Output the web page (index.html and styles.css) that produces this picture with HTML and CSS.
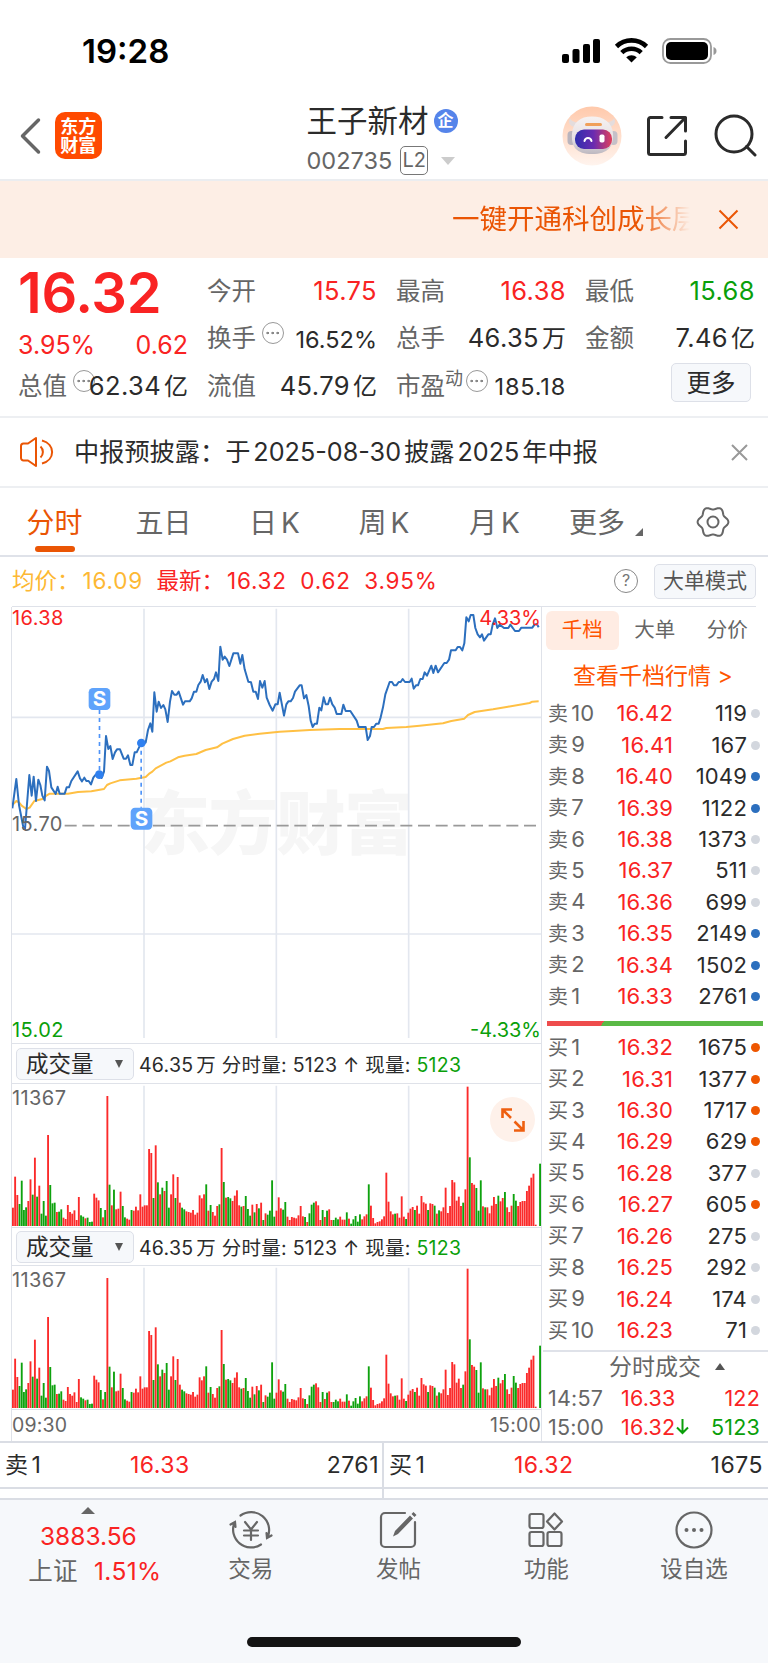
FILE: index.html
```html
<!DOCTYPE html>
<html lang="zh-CN">
<head>
    <meta charset="UTF-8">
    <meta name="viewport" content="width=device-width, initial-scale=1.0">
    <title>王子新材 002735</title>
    <link rel="stylesheet" href="styles.css">
</head>
<body>
    <div class="status-bar">
        <span class="clock">19:28</span>
        <svg class="status-icons" width="156" height="28" viewBox="0 0 156 28">
            <rect x="1" y="17" width="7" height="9" rx="2"/>
            <rect x="11.5" y="12" width="7" height="14" rx="2"/>
            <rect x="22" y="7" width="7" height="19" rx="2"/>
            <rect x="32" y="2" width="7" height="24" rx="2"/>
            <g fill="none" stroke="#000" stroke-width="4.6">
                <path d="M55.5 9.5a21.5 21.5 0 0 1 30 0"/>
                <path d="M60.8 15.6a14 14 0 0 1 19.4 0"/>
            </g>
            <path d="M65.2 20.2a8 8 0 0 1 10.6 0L70.5 25.6z"/>
            <rect x="102" y="2" width="48" height="24" rx="7.5" fill="none" stroke="#999" stroke-width="1.8"/>
            <rect x="105" y="5" width="42" height="18" rx="5"/>
            <path d="M152.5 10v8c2.400-.8 3-2.400 3-4s-.6-3.200-3-4z" fill="#999"/>
        </svg>
    </div>

    <header class="header">
        <svg class="back" width="22" height="38" viewBox="0 0 22 38"><path d="M19.500 3L3.500 19l16 16"/></svg>
        <div class="logo"><span>东方</span><span>财富</span></div>
        <div class="stock">
            <div class="stock-name">王子新材<span class="badge">企</span></div>
            <div class="stock-code">002735<span class="level">L2</span><i class="caret"></i></div>
        </div>
        <svg class="robot" width="60" height="60" viewBox="0 0 60 60">
            <defs>
                <linearGradient id="halo" x1="0" y1="0" x2="0" y2="1">
                    <stop offset="0" stop-color="#ffc9ab"/><stop offset="1" stop-color="#fff4ee"/>
                </linearGradient>
                <linearGradient id="visor" x1="0" y1="0" x2="1" y2="0">
                    <stop offset="0" stop-color="#2f2fae"/><stop offset=".5" stop-color="#6a2bb0"/><stop offset="1" stop-color="#e0405c"/>
                </linearGradient>
                <linearGradient id="head" x1="0" y1="0" x2="0" y2="1">
                    <stop offset="0" stop-color="#f6f2f2"/><stop offset=".6" stop-color="#e6e0e3"/><stop offset="1" stop-color="#bdb8c0"/>
                </linearGradient>
            </defs>
            <circle cx="30" cy="30" r="29.500" fill="url(#halo)"/>
            <path d="M13 21c-6-1-7-5-5-9 1 3 4 4 9 5zM47 21c6-1 7-5 5-9-1 3-4 4-9 5z" fill="#e4dcdc"/>
            <rect x="5.500" y="25" width="8" height="14" rx="4" fill="#b9b4bd"/>
            <rect x="47.500" y="25" width="8" height="14" rx="4" fill="#c5c0c8"/>
            <path d="M30 10.500c12 0 20 6 21 17 1 13-5 20.500-21 20.500S9 40.500 10 27.500c1-11 8-17 20-17z" fill="url(#head)"/>
            <rect x="23" y="17" width="17" height="3" rx="1.500" fill="#f0a05a"/>
            <rect x="13" y="23.500" width="37" height="19.500" rx="9" fill="url(#visor)"/>
            <path d="M22.500 35c1-4 6-4 7 0" fill="none" stroke="#fff" stroke-width="2"/>
            <rect x="37.500" y="28.500" width="5" height="8" rx="1.800" fill="#fff"/>
        </svg>
        <svg class="share" width="42" height="42" viewBox="0 0 42 42">
            <path d="M16 2.500H4.500a2 2 0 0 0-2 2v33a2 2 0 0 0 2 2h33a2 2 0 0 0 2-2V26M25 2.500h14.500V16M39.500 2.500L20 22.500"/>
        </svg>
        <svg class="search" width="43" height="43" viewBox="0 0 43 43">
            <circle cx="20" cy="20" r="18"/><path d="M32.500 32.500l8.500 8.500"/>
        </svg>
    </header>

    <div class="banner">
        <div class="banner-text">一键开通科创成长层</div>
        <svg width="21" height="21" viewBox="0 0 21 21"><path d="M1.500 1.500l18 18M19.500 1.500l-18 18"/></svg>
    </div>

    <section class="quote">
        <div class="last">
            <div class="price">16.32</div>
            <div class="change"><span>3.95%</span><span>0.62</span></div>
        </div>
        <div class="cell"><label>今开</label><span class="up">15.75</span></div>
        <div class="cell"><label>最高</label><span class="up">16.38</span></div>
        <div class="cell"><label>最低</label><span class="down">15.68</span></div>
        <div class="cell"><label>换手<i class="tip"></i></label><span class="small">16.52%</span></div>
        <div class="cell"><label>总手</label><span>46.35<em>万</em></span></div>
        <div class="cell"><label>金额</label><span>7.46<em>亿</em></span></div>
        <div class="cell"><label>总值<i class="tip"></i></label><span>62.34<em>亿</em></span></div>
        <div class="cell"><label>流值</label><span>45.79<em>亿</em></span></div>
        <div class="cell"><label>市盈<sup>动</sup><i class="tip"></i></label><span class="small wide">185.18</span></div>
        <button class="more">更多</button>
    </section>

    <div class="notice">
        <svg class="horn" width="36" height="30" viewBox="0 0 36 30">
            <path d="M9 6.500H4.500a2.500 2.500 0 0 0-2.500 2.500v12a2.500 2.500 0 0 0 2.500 2.500H9l8 5.500V1z"/>
            <path d="M21.500 9.500a7.500 7.500 0 0 1 0 11M23 3.500c13.500 3.500 13.500 19.500 0 23"/>
        </svg>
        <span>中报预披露：于<b>2025-08-30</b>披露<b>2025</b>年中报</span>
        <svg class="close" width="17" height="17" viewBox="0 0 17 17"><path d="M1 1l15 15M16 1L1 16"/></svg>
    </div>

    <nav class="tabs">
        <a class="active">分时</a>
        <a>五日</a>
        <a>日<b>K</b></a>
        <a>周<b>K</b></a>
        <a>月<b>K</b></a>
        <a class="tab-more">更多<i class="corner"></i></a>
        <svg width="34" height="34" viewBox="0 0 34 34">
            <path id="gear" d=""/>
            <circle cx="17" cy="17" r="5.500"/>
        </svg>
    </nav>

    <div class="summary">
        <span class="avg">均价：<b>16.09</b></span>
        <span class="up newest">最新：<b>16.32</b></span>
        <b class="up">0.62</b>
        <b class="up">3.95%</b>
        <span class="help">?</span>
        <button>大单模式</button>
    </div>

    <main class="main">
        <div class="charts">
            <div class="price-chart">
                <svg width="530" height="438" viewBox="0 0 1590 1314">
                    <text class="watermark" x="386" y="730" textLength="818">东方财富</text>
                    <g class="grid">
                        <path d="M396 8V1296M793 8V1296M1190 8V1296M0 334H1588M0 984H1588"/>
                    </g>
                    <path class="base" d="M158 659H1580"/>
                    <polyline class="avg-line" id="avgLine"/>
                    <polyline class="price-line" id="priceLine"/>
                    <g class="mark">
                        <path d="M262.500 312V505M387.500 410V605"/>
                        <circle cx="262" cy="506" r="13"/><circle cx="388" cy="411" r="13"/>
                        <rect x="230" y="246" width="65" height="66" rx="13"/>
                        <rect x="356" y="605" width="65" height="66" rx="13"/>
                        <text x="262.500" y="300">S</text><text x="388.500" y="659">S</text>
                    </g>
                </svg>
                <span class="label top-left up">16.38</span>
                <span class="label top-right up">4.33%</span>
                <span class="label middle">15.70</span>
                <span class="label bottom-left down">15.02</span>
                <span class="label bottom-right down">-4.33%</span>
            </div>

            <div class="vol-head">
                <div class="select">成交量<i></i></div>
                <span>46.35<em>万</em> 分时量: 5123 ↑ 现量: <b class="down">5123</b></span>
            </div>
            <div class="vol-chart">
                <svg width="530" height="145" viewBox="0 0 1590 435"></svg>
                <span class="label vol-max">11367</span>
                <div class="expand">
                    <svg width="24" height="24" viewBox="0 0 24 24"><path d="M10 10L2 2M1.500 10V1.500H11M13.500 13.500L22 22M22.500 13V22.500H13"/></svg>
                </div>
            </div>

            <div class="vol-head second">
                <div class="select">成交量<i></i></div>
                <span>46.35<em>万</em> 分时量: 5123 ↑ 现量: <b class="down">5123</b></span>
            </div>
            <div class="vol-chart">
                <svg width="530" height="145" viewBox="0 0 1590 435"></svg>
                <span class="label vol-max">11367</span>
            </div>
            <div class="times"><span>09:30</span><span>15:00</span></div>
        </div>

        <aside class="depth">
            <div class="depth-tabs"><span class="active">千档</span><span>大单</span><span>分价</span></div>
            <div class="depth-link">查看千档行情 <b>&gt;</b></div>
            <div class="levels" id="sells"></div>
            <div class="ratio"></div>
            <div class="levels" id="buys"></div>
            <div class="deals">
                <div class="deals-title">分时成交<i></i></div>
                <div class="deal"><span>14:57</span><span class="up">16.33</span><span class="up">122</span></div>
                <div class="deal"><span>15:00</span><span class="up">16.32<svg width="13" height="17" viewBox="0 0 13 17"><path d="M6.500 1v14M1 9.500L6.500 15 12 9.500"/></svg></span><span class="down">5123</span></div>
            </div>
        </aside>
    </main>

    <div class="best">
        <div><span>卖<b>1</b></span><span class="up">16.33</span><span>2761</span></div>
        <div><span>买<b>1</b></span><span class="up">16.32</span><span>1675</span></div>
    </div>

    <footer class="toolbar">
        <div class="index">
            <i></i>
            <span class="up">3883.56</span>
            <span>上证<b class="up">1.51%</b></span>
        </div>
        <div class="tool">
            <svg width="44" height="40" viewBox="0 0 44 40">
                <path d="M11.500 5.500A18 18 0 0 1 38.500 27.500M32 34.500A18 18 0 0 1 5.500 12.500M1.500 14.500l4.500-2.500.500 5M42.500 25.500l-4.500 2.500-.5-5"/>
                <path d="M16 12l6 7.500 6-7.500M22 19.500V30M15 20.500h14M15 25.500h14"/>
            </svg>
            <span>交易</span>
        </div>
        <div class="tool">
            <svg width="44" height="40" viewBox="0 0 44 40">
                <path d="M29 3H9a4 4 0 0 0-4 4v26a4 4 0 0 0 4 4h26a4 4 0 0 0 4-4V12"/>
                <path class="solid" d="M34 5.500l3 3L22 24l-5 2.500L19 21zM35.500 4l2-2 3 3-2 2z"/>
            </svg>
            <span>发帖</span>
        </div>
        <div class="tool">
            <svg width="44" height="40" viewBox="0 0 44 40">
                <rect x="5.500" y="4" width="14" height="14" rx="2"/>
                <rect x="5.500" y="22" width="14" height="14" rx="2"/>
                <rect x="23.500" y="22" width="14" height="14" rx="2"/>
                <path d="M30.500 3.500l7.500 8-7.500 8-7.500-8z" stroke-linejoin="round"/>
            </svg>
            <span>功能</span>
        </div>
        <div class="tool">
            <svg width="44" height="40" viewBox="0 0 44 40">
                <circle cx="22" cy="20" r="17.500"/>
                <circle class="solid" cx="14.500" cy="20" r="2"/><circle class="solid" cx="22" cy="20" r="2"/><circle class="solid" cx="29.500" cy="20" r="2"/>
            </svg>
            <span>设自选</span>
        </div>
        <div class="home"></div>
    </footer>

    <script src="chart.js"></script>
</body>
</html>
```
FILE: styles.css
```css
* {
    box-sizing: border-box;
}
body {
    margin: 0;
    width: 768px;
    height: 1663px;
    overflow: hidden;
    background: #fff;
    color: #2b2b2b;
    font-family: Inter, "Noto Sans CJK SC", sans-serif;
    font-size: 24px;
}
b, em, i {
    font-weight: 400;
    font-style: normal;
}
svg {
    display: block;
    flex: none;
}
span, label, a {
    white-space: nowrap;
}
.up {
    color: #f92323;
}
.down {
    color: #0a9f0a;
}
button {
    font: inherit;
    color: inherit;
    padding: 0;
    background: #f6f8fb;
    border: 1.5px solid #dde0e8;
    border-radius: 5px;
}

/* status bar */
.status-bar {
    height: 98px;
    padding: 4px 51px 0 82px;
    display: flex;
    justify-content: space-between;
    align-items: center;
}
.clock {
    font-size: 33px;
    font-weight: 600;
    color: #000;
    line-height: 40px;
}

/* header */
.header {
    height: 83px;
    border-bottom: 2px solid #ebedf0;
    display: flex;
    align-items: center;
    padding: 0 11px 6px 19px;
}
.header svg {
    fill: none;
    stroke: #2b2b2b;
    stroke-width: 3;
    stroke-linecap: round;
    stroke-linejoin: round;
}
.header .back {
    stroke: #666;
    stroke-width: 3.5;
}
.logo {
    width: 47px;
    height: 47px;
    margin-left: 14px;
    border-radius: 10px;
    background: #ff4a00;
    color: #fff;
    font-size: 18px;
    font-weight: 700;
    line-height: 19px;
    display: flex;
    flex-direction: column;
    align-items: center;
    justify-content: center;
}
.stock {
    width: 160px;
    margin-left: 205px;
    padding-top: 8px;
}
.stock-name {
    font-size: 30.5px;
    line-height: 38px;
    display: flex;
    align-items: center;
}
.badge {
    width: 24px;
    height: 24px;
    margin-left: 5px;
    border-radius: 50%;
    background: #5584ea;
    color: #fff;
    font-size: 16px;
    font-weight: 700;
    line-height: 23px;
    text-align: center;
}
.stock-code {
    height: 34px;
    margin-top: 4px;
    font-size: 23.5px;
    color: #666;
    display: flex;
    align-items: center;
}
.level {
    width: 28px;
    height: 29px;
    margin: 0 13px 0 8px;
    border: 1.5px solid #777;
    border-radius: 5px;
    font-size: 20px;
    line-height: 27px;
    text-align: center;
}
.caret {
    border: 7px solid transparent;
    border-top: 8px solid #ccc;
    border-bottom: 0;
}
.header .robot {
    margin-left: 97px;
    stroke: none;
}
.header .robot path[stroke] {
    stroke-width: 2;
}
.share {
    margin-left: 24px;
}
.search {
    margin-left: 26px;
}

/* banner */
.banner {
    height: 77px;
    background: #fdeee5;
    padding: 0 29px 0 452px;
    display: flex;
    align-items: center;
    justify-content: space-between;
}
.banner-text {
    width: 238px;
    margin-top: -5px;
    overflow: hidden;
    white-space: nowrap;
    font-size: 27.5px;
    color: #ea5504;
    -webkit-mask-image: linear-gradient(90deg, #000 78%, transparent 100%);
    mask-image: linear-gradient(90deg, #000 78%, transparent 100%);
}
.banner svg {
    fill: none;
    stroke: #ea5504;
    stroke-width: 2;
}

/* quote */
.quote {
    height: 160px;
    border-bottom: 2px solid #edeff2;
    padding: 9px 12px 0 18px;
    display: grid;
    grid-template-columns: repeat(4, 170px);
    grid-template-rows: repeat(3, 47.5px);
    column-gap: 19px;
}
.last {
    grid-row: span 2;
    color: #f92323;
}
.price {
    margin-top: -2px;
    font-size: 56px;
    font-weight: 600;
    line-height: 56px;
    letter-spacing: -0.3px;
}
.change {
    display: flex;
    justify-content: space-between;
    line-height: 48px;
    font-size: 25px;
}
.cell {
    display: flex;
    justify-content: space-between;
    align-items: center;
    font-size: 25.5px;
    letter-spacing: 0.4px;
    line-height: 40px;
}
.cell label {
    display: flex;
    color: #666;
    font-size: 24.5px;
    letter-spacing: 0;
}
.cell em {
    margin-left: 3px;
    font-size: 24px;
    letter-spacing: 0;
    line-height: 30px;
}
.cell .small {
    font-size: 23.5px;
    padding-top: 3px;
    letter-spacing: 0;
}
.cell .wide {
    letter-spacing: 0.8px;
}
.cell sup {
    font-size: 18px;
    line-height: 26px;
}
.tip {
    width: 22px;
    height: 22px;
    margin: 4px -30px 0 6px;
    border: 1.5px solid #999;
    border-radius: 50%;
    background: radial-gradient(circle, #888 1px, transparent 1.6px) 1.5px center / 5.3px 100% no-repeat,
        radial-gradient(circle, #888 1px, transparent 1.6px) center / 5.3px 100% no-repeat,
        radial-gradient(circle, #888 1px, transparent 1.6px) 12.2px center / 5.3px 100% no-repeat;
}
.cell sup + .tip {
    margin-left: 3px;
}
.more {
    width: 80px;
    height: 39px;
    margin: 1px 0 0 86px;
    line-height: 34px;
    font-size: 24.5px;
}

/* notice */
.notice {
    height: 70px;
    border-bottom: 2px solid #edeff2;
    padding: 0 20px 0 19px;
    display: flex;
    align-items: center;
    font-size: 25.2px;
}
.notice span {
    flex: 1;
    margin: -4px 0 0 19px;
}
.notice b {
    margin: 0 3px;
}
.notice svg {
    fill: none;
    stroke: #ea5504;
    stroke-width: 2;
    stroke-linejoin: round;
}
.notice .close {
    stroke: #999;
}

/* tabs */
.tabs {
    height: 69px;
    border-bottom: 2px solid #dfe2e9;
    display: grid;
    grid-template-columns: 109px 109px 113px 106px 115px 108px 108px;
    font-size: 28px;
    color: #666;
}
.tabs a {
    text-align: center;
    line-height: 70px;
}
.tabs b {
    margin-left: 4px;
}
.tabs .active {
    position: relative;
    color: #ea5504;
}
.tabs .active::after {
    content: "";
    position: absolute;
    left: 35px;
    top: 58px;
    width: 40px;
    height: 6px;
    border-radius: 3px;
    background: #ea5504;
}
.corner {
    display: inline-block;
    margin-left: 10px;
    border: 4px solid #666;
    border-top-color: transparent;
    border-left-color: transparent;
    vertical-align: -3px;
}
.tabs svg {
    margin: 17px 0 0 36px;
    fill: none;
    stroke: #666;
    stroke-width: 2;
}

/* averages line */
.summary {
    height: 50px;
    margin: 0 12px;
    border-bottom: 1px solid #dfe2e9;
    display: flex;
    align-items: center;
    font-size: 22.5px;
    line-height: 30px;
    padding-bottom: 1px;
}
.summary b {
    margin-right: 13.5px;
    letter-spacing: 0.8px;
}
.summary span b {
    margin-left: 3px;
}
.avg {
    color: #fdb833;
}
.help {
    width: 24px;
    height: 24px;
    margin: 0 16px 0 auto;
    border: 1.5px solid #888;
    border-radius: 50%;
    font-size: 16px;
    line-height: 21px;
    text-align: center;
    color: #777;
}
.summary button {
    width: 102px;
    height: 35px;
    font-size: 21px;
    line-height: 30px;
    color: #555;
}

/* charts */
.main {
    height: 834px;
    display: flex;
}
.charts {
    width: 531px;
    margin-left: 11px;
    border-left: 1px solid #dfe2e9;
    border-right: 1px solid #dfe2e9;
}
.price-chart, .vol-chart {
    position: relative;
    border-bottom: 1px solid #dfe2e9;
}
.price-chart {
    height: 438px;
}
.price-chart svg {
    margin-top: -1px;
}
.grid {
    fill: none;
    stroke: #e3e7ef;
    stroke-width: 5;
}
.watermark {
    font-size: 208px;
    font-weight: 900;
    fill: #f6f6f6;
}
.base {
    stroke: #999;
    stroke-width: 5;
    stroke-dasharray: 36 17;
}
.avg-line, .price-line {
    fill: none;
    stroke: #ffc044;
    stroke-width: 6;
    stroke-linejoin: round;
}
.price-line {
    stroke: #2c6fbe;
}
.mark path {
    stroke: #4f94f8;
    stroke-width: 5;
    stroke-dasharray: 12 12;
}
.mark circle {
    fill: #2f80f0;
}
.mark rect {
    fill: #5fa3fb;
}
.mark text {
    fill: #fff;
    font-size: 62px;
    font-weight: 700;
    text-anchor: middle;
}
.label {
    position: absolute;
    font-size: 20px;
    line-height: 24px;
    letter-spacing: 0.4px;
}
.top-left {
    left: 0;
    top: 0;
}
.top-right {
    right: 0;
    top: 0;
    letter-spacing: 0;
}
.middle {
    left: 0;
    top: 206px;
    color: #666;
}
.bottom-left {
    left: 0;
    bottom: 1px;
}
.bottom-right {
    right: 0;
    bottom: 1px;
    letter-spacing: 0;
}
.vol-head {
    height: 40px;
    padding-left: 4px;
    border-bottom: 1px solid #dfe2e9;
    display: flex;
    align-items: center;
    font-size: 19.5px;
    letter-spacing: 0.25px;
}
.vol-head.second {
    height: 38px;
}
.vol-head em {
    margin-left: 3px;
}
.select {
    width: 118px;
    height: 32px;
    margin-right: 5px;
    padding: 0 10px 0 9px;
    border: 1.5px solid #dde0e8;
    border-radius: 5px;
    background: #f6f8fb;
    display: flex;
    align-items: center;
    justify-content: space-between;
    font-size: 22.5px;
    line-height: 28px;
    letter-spacing: 0;
}
.select i {
    border: 4.5px solid transparent;
    border-top: 8px solid #555;
    border-bottom: 0;
}
.vol-chart {
    height: 145px;
}
.vol-chart svg {
    margin-top: -1px;
}
.vol-max {
    left: 0;
    top: 3px;
    color: #666;
}
.expand {
    position: absolute;
    right: 6px;
    top: 14px;
    width: 45px;
    height: 45px;
    border-radius: 50%;
    background: #fef1ea;
    display: grid;
    place-items: center;
}
.expand svg {
    margin: 0;
    fill: none;
    stroke: #ee5f10;
    stroke-width: 2.6;
}
.times {
    display: flex;
    justify-content: space-between;
    font-size: 19.5px;
    line-height: 31px;
    letter-spacing: 0.2px;
    color: #666;
}

/* order book */
.depth {
    width: 226px;
    padding-left: 1px;
    display: flex;
    flex-direction: column;
}
.depth-tabs {
    margin: 4px 0 0 3px;
    height: 39px;
    display: flex;
    color: #666;
    font-size: 20.5px;
    line-height: 38px;
    text-align: center;
}
.depth-tabs span {
    width: 72.5px;
}
.depth-tabs .active {
    color: #ff5400;
    background: #ffece3;
    border-radius: 6px;
}
.depth-link {
    height: 48px;
    padding-left: 30px;
    font-size: 23px;
    line-height: 52px;
    color: #ff5400;
}
.level-row {
    height: 31.45px;
    padding: 0 8px 0 5px;
    display: grid;
    grid-template-columns: 50px 75px 74px 9px;
    align-items: center;
    font-size: 22px;
    line-height: 31px;
    letter-spacing: 0.15px;
    text-align: right;
}
.level-row .name {
    color: #666;
    text-align: left;
    font-size: 20px;
}
.level-row .name b {
    margin-left: 3px;
    font-size: 22px;
}
.dot {
    width: 9px;
    height: 9px;
    margin-left: 4px;
    border-radius: 50%;
    background: #d3d7de;
}
.dot.sell {
    background: #2c6fbe;
}
.dot.buy {
    background: #ee5600;
}
.ratio {
    width: 216px;
    height: 5px;
    margin: 8.5px 0 6px 4px;
    background: linear-gradient(130deg, #ee4c4c 44px, #5ab946 44px);
}
.deals {
    border-top: 2px solid #dfe2e9;
    margin-top: 4px;
}
.deals-title {
    height: 31px;
    padding: 0 43px 2px 66px;
    display: flex;
    align-items: center;
    justify-content: space-between;
    color: #666;
    font-size: 23px;
    line-height: 28px;
}
.deals-title i {
    border: 5px solid transparent;
    border-bottom: 7px solid #555;
    border-top: 0;
}
.deal {
    height: 29px;
    padding: 0 8px 0 5px;
    display: grid;
    grid-template-columns: 73px 80px 1fr;
    align-items: center;
    font-size: 21.5px;
    letter-spacing: 0.2px;
    color: #666;
}
.deal span {
    display: flex;
    align-items: center;
}
.deal span:last-child {
    justify-content: flex-end;
}
.deal svg {
    margin-left: 1px;
    fill: none;
    stroke: #0a9f0a;
    stroke-width: 2;
}

/* best bid / ask */
.best {
    height: 57px;
    border-top: 2px solid #dadde4;
    display: flex;
}
.best div {
    flex: 1;
    height: 46px;
    padding: 0 5px 0 5px;
    border-bottom: 2px solid #dadde4;
    display: grid;
    grid-template-columns: 125px 1fr 1fr;
    align-items: center;
    font-size: 23px;
    line-height: 30px;
    letter-spacing: 0.5px;
    position: relative;
}
.best div + div::before {
    content: "";
    position: absolute;
    left: -2px;
    top: 0;
    width: 2px;
    height: 56px;
    background: #dadde4;
}
.best span:last-child {
    text-align: right;
}
.best b {
    margin-left: 3px;
}

/* toolbar */
.toolbar {
    position: relative;
    height: 166px;
    background: #f6f8fb;
    border-top: 2px solid #dadde4;
    display: flex;
    color: #666;
}
.index {
    width: 177px;
    display: flex;
    flex-direction: column;
    align-items: center;
    padding-top: 7px;
    line-height: 35px;
    font-size: 24.5px;
}
.index i {
    margin-bottom: 5px;
    border: 7px solid transparent;
    border-bottom: 7px solid #666;
    border-top: 0;
}
.index span:last-child {
    margin-left: 13px;
    letter-spacing: 0.4px;
}
.index b {
    margin-left: 16px;
}
.tool {
    width: 148px;
    display: flex;
    flex-direction: column;
    align-items: center;
    padding-top: 10px;
    font-size: 22.5px;
    line-height: 38px;
}
.tool svg {
    fill: none;
    stroke: #666;
    stroke-width: 2.2;
    stroke-linecap: round;
}
.tool .solid {
    fill: #666;
    stroke: none;
}
.home {
    position: absolute;
    left: 247px;
    bottom: 17px;
    width: 274px;
    height: 10px;
    border-radius: 5px;
    background: #141414;
}
```
FILE: chart.js
```js
// minute line, drawn on the 1590 x 1314 chart canvas
const price = `1,607 13,519 21,597 35,669 39,669 52,507 59,569 65,512 72,585 79,521 85,537 91,569 98,583 105,482 111,495 118,544
131,564 137,542 143,563 158,563 164,544 171,544 178,525 197,496 204,517 210,526 217,515 223,525 230,525 237,535 244,515
250,507 262,505 269,516 276,497 282,390 289,429 295,420 302,459 309,439 315,430 324,430 335,458 342,458 348,448 355,477
361,477 368,439 374,439 388,410 401,410 408,372 415,352 421,377 427,259 434,317 440,287 447,306 454,297 460,310 467,348
474,287 480,255 487,266 494,266 500,257 513,296 519,286 533,286 539,277 546,257 553,257 559,237 566,227 572,207 579,229
585,219 592,249 599,227 606,219 612,199 619,225 625,122 632,161 638,152 645,161 652,180 664,142 678,142 685,173 691,147
698,190 709,227 717,229 724,257 731,257 738,279 744,225 751,245 758,225 764,275 773,297 782,314 790,295 797,295 803,260
816,329 823,295 829,286 836,286 843,276 849,257 863,238 869,238 876,277 883,267 890,300 896,344 902,363 908,353 915,353
922,305 928,313 935,274 941,295 948,295 954,275 961,295 968,305 974,324 988,324 994,296 1001,315 1015,315 1034,344
1040,363 1061,363 1067,402 1074,390 1079,363 1086,363 1093,353 1100,353 1106,334 1113,304 1120,265 1133,228 1140,228
1146,238 1153,238 1160,228 1166,228 1172,219 1179,228 1193,228 1199,218 1205,248 1212,238 1218,238 1225,219 1232,219
1238,199 1245,209 1258,179 1264,201 1271,179 1278,199 1297,171 1304,171 1311,161 1317,133 1331,133 1337,123 1344,123
1351,133 1357,112 1363,34 1370,46 1376,27 1384,27 1390,66 1397,85 1404,94 1410,85 1416,104 1429,85 1436,85 1442,56
1449,37 1456,66 1463,56 1476,66 1489,66 1495,56 1509,75 1521,75 1528,65 1561,65 1568,55 1575,55 1580,64`;

const average = `1,597 13,585 21,589 29,599 43,609 53,605 67,585 91,579 103,569 113,563 168,563 198,558 238,556 276,549 285,537
295,532 323,523 373,518 401,513 413,502 421,497 431,487 463,470 475,466 498,454 518,449 553,444 581,432 615,424 631,413
663,399 698,389 743,383 773,380 803,377 843,375 893,372 983,369 1113,369 1123,366 1183,363 1223,359 1293,352 1318,345
1357,338 1368,327 1388,318 1443,310 1488,302 1553,291 1561,287 1580,286`;

// volume per minute: r = up, g = down
const volume = `r55 r148 r93 g66 g136 g48 g56 r75 r140 g94 r205 g88 r121 g37 g75 g31 r273 g123 g68 g70 r42 g43 g50 r25 r21
r63 r42 r37 r47 r18 r87 g32 g28 r23 g25 g12 g13 r97 r85 r77 g54 r26 g48 r390 g124 r62 g109 r50 r52 r103 g60 g26 r22 r19
g48 r46 r58 r47 r95 r58 r62 r62 r231 r219 g84 r242 g131 r95 g115 r105 g135 g55 r95 r155 g84 r147 r70 g55 g50 r44 r42 r40
r48 r34 r40 r92 r83 r95 g125 r46 g63 r42 r31 r60 g65 r234 g132 r85 g87 g83 r75 r91 r107 r62 g58 r60 g90 g51 g31 r64 g41
r66 g53 r70 g18 r38 g34 g46 g137 g28 r46 r86 r53 g49 g72 r28 r18 r27 r25 r23 r32 r60 r29 g27 r12 g38 g64 g70 r74 r62 r18
g48 r27 g46 r50 r18 g18 g25 g20 r28 r19 r19 g41 r22 g7 g20 g30 g13 g35 r20 r29 r35 g125 r61 r24 r8 r12 r14 r20 r29 r160
r73 r44 r35 g37 r38 r25 r89 r28 g21 r40 r52 r57 g48 r61 r37 r90 r71 r67 g48 r68 r66 g61 r37 g47 r44 r56 r115 r39 r60 r138
r131 r76 r88 r60 g70 r110 r418 g206 r129 r124 g114 g46 g137 r59 g56 r56 r38 r61 r87 r66 g91 r74 r84 g102 r56 r42 r61 g96
g76 r60 r72 r75 r75 r105 r121 r145 r157 r4 r0 g187`.split(/\s+/);

document.getElementById('priceLine').setAttribute('points', price);
document.getElementById('avgLine').setAttribute('points', average);

const step = 1588 / volume.length;
let bars = '<path class="grid" d="M396 8V428M793 8V428M1190 8V428"/>';
volume.forEach((v, i) => {
    const h = Number(v.slice(1));
    const fill = v[0] === 'r' ? '#fb2a2a' : '#0ea20e';
    bars += `<rect x="${(i * step).toFixed(1)}" y="${429 - h}" width="5.6" height="${h}" fill="${fill}"/>`;
});
document.querySelectorAll('.vol-chart > svg').forEach(svg => {
    svg.innerHTML = bars;
});

// order book rows, last flag marks a coloured dot
const sells = [['10', 16.42, 119], ['9', 16.41, 167], ['8', 16.40, 1049, 1], ['7', 16.39, 1122, 1], ['6', 16.38, 1373],
    ['5', 16.37, 511], ['4', 16.36, 699], ['3', 16.35, 2149, 1], ['2', 16.34, 1502, 1], ['1', 16.33, 2761, 1]];
const buys = [['1', 16.32, 1675, 1], ['2', 16.31, 1377, 1], ['3', 16.30, 1717, 1], ['4', 16.29, 629, 1], ['5', 16.28, 377],
    ['6', 16.27, 605, 1], ['7', 16.26, 275], ['8', 16.25, 292], ['9', 16.24, 174], ['10', 16.23, 71]];

function fillLevels(id, rows, word, cls) {
    document.getElementById(id).innerHTML = rows.map(([n, p, vol, big]) => `
        <div class="level-row">
            <span class="name">${word}<b>${n}</b></span>
            <span class="up">${p.toFixed(2)}</span>
            <span>${vol}</span>
            <i class="dot ${big ? cls : ''}"></i>
        </div>`).join('');
}
fillLevels('sells', sells, '卖', 'sell');
fillLevels('buys', buys, '买', 'buy');

// gear outline with six soft teeth
let gear = '';
for (let a = 0; a <= 360; a += 4) {
    const r = 13.9 + 1.5 * Math.cos(a * 6 * Math.PI / 180);
    const t = a * Math.PI / 180;
    gear += `${a ? 'L' : 'M'}${(17 + r * Math.cos(t)).toFixed(2)} ${(17 + r * Math.sin(t)).toFixed(2)}`;
}
document.getElementById('gear').setAttribute('d', gear + 'z');
```
